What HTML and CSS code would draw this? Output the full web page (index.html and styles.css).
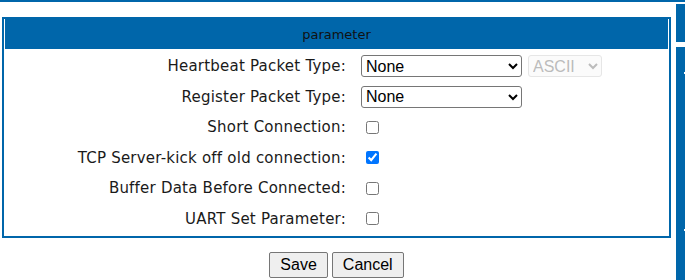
FILE: index.html
```html
<!DOCTYPE html>
<html>
<head>
<meta charset="utf-8">
<link rel="stylesheet" href="styles.css">
</head>
<body>
<div class="page">
  <div class="topline"></div>
  <div class="layout">
    <main class="main">
      <div class="box">
        <div class="box-head">parameter</div>
        <div class="rows">
          <label class="lbl">Heartbeat Packet Type:</label>
          <div class="val">
            <select class="sel sel-main"><option>None</option></select>
            <select class="sel sel-small" disabled><option>ASCII</option></select>
          </div>
          <label class="lbl">Register Packet Type:</label>
          <div class="val">
            <select class="sel sel-main"><option>None</option></select>
          </div>
          <label class="lbl">Short Connection:</label>
          <div class="val"><input type="checkbox" class="chk"></div>
          <label class="lbl">TCP Server-kick off old connection:</label>
          <div class="val"><input type="checkbox" class="chk" checked></div>
          <label class="lbl">Buffer Data Before Connected:</label>
          <div class="val"><input type="checkbox" class="chk"></div>
          <label class="lbl">UART Set Parameter:</label>
          <div class="val"><input type="checkbox" class="chk"></div>
        </div>
      </div>
      <div class="actions">
        <button class="btn">Save</button>
        <button class="btn">Cancel</button>
      </div>
    </main>
    <aside class="side">
      <div class="side-block side-a"></div>
      <div class="side-block side-b">
        <span class="dot dot-1"></span>
        <span class="dot dot-2"></span>
      </div>
    </aside>
  </div>
</div>
</body>
</html>
```

FILE: styles.css
```css
html, body {
  margin: 0;
  padding: 0;
  background: #fff;
}
.page {
  width: 685px;
  height: 280px;
  overflow: hidden;
  display: flex;
  flex-direction: column;
}
.topline {
  height: 2px;
  background: #0066aa;
  flex: none;
}
.layout {
  flex: 1;
  display: flex;
}
.main {
  width: 676px;
  flex: none;
  box-sizing: border-box;
  padding: 15px 5px 0 2px;
}
.box {
  border: 2px solid #0066aa;
  padding: 0 1px 2px 1px;
  margin-top: 0;
}
.box-head {
  height: 30px;
  margin-top: -2px;
  padding-top: 2px;
  background: #0066aa;
  color: #111;
  font-family: "DejaVu Sans", Verdana, sans-serif;
  font-size: 13px;
  display: flex;
  align-items: center;
  justify-content: center;
}
.rows {
  display: grid;
  grid-template-columns: 341px 1fr;
  column-gap: 15px;
  grid-auto-rows: 30.5px;
  padding-top: 2px;
  font-family: "DejaVu Sans", Verdana, sans-serif;
  font-size: 15px;
  letter-spacing: 0.22px;
  color: #1a1a1a;
}
.lbl {
  display: flex;
  align-items: center;
  justify-content: flex-end;
}
.val {
  display: flex;
  align-items: center;
  gap: 6px;
  letter-spacing: 0;
}
.sel {
  height: 22px;
  box-sizing: border-box;
  font-family: "Liberation Sans", Arial, sans-serif;
  font-size: 16px;
  margin: 0;
  border-radius: 3px;
}
.sel-main {
  width: 161px;
  border: 1px solid #767676;
  background: #fff;
  color: #000;
}
.sel-small {
  width: 74px;
  border: 1px solid #dcdcdc;
  background: #fafafa;
  color: #a0a0a0;
}
.chk {
  width: 13px;
  height: 13px;
  margin: 0 0 0 5px;
}
.actions {
  display: flex;
  justify-content: center;
  gap: 4px;
  margin-top: 14px;
}
.btn {
  height: 26px;
  padding: 1px 10px;
  font-family: "Liberation Sans", Arial, sans-serif;
  font-size: 16px;
  color: #000;
  background: #efefef;
  border: 1px solid #767676;
  border-radius: 2px;
}
.side {
  width: 9px;
  flex: none;
  padding-top: 2px;
  display: flex;
  flex-direction: column;
  gap: 5px;
}
.side-block {
  background: #0066aa;
}
.side-a {
  height: 38px;
}
.side-b {
  flex: 1;
  position: relative;
}
.dot {
  position: absolute;
  right: 0;
  width: 1px;
  height: 2px;
  background: #fff;
}
.dot-1 { top: 25px; }
.dot-2 { top: 182px; }
```
